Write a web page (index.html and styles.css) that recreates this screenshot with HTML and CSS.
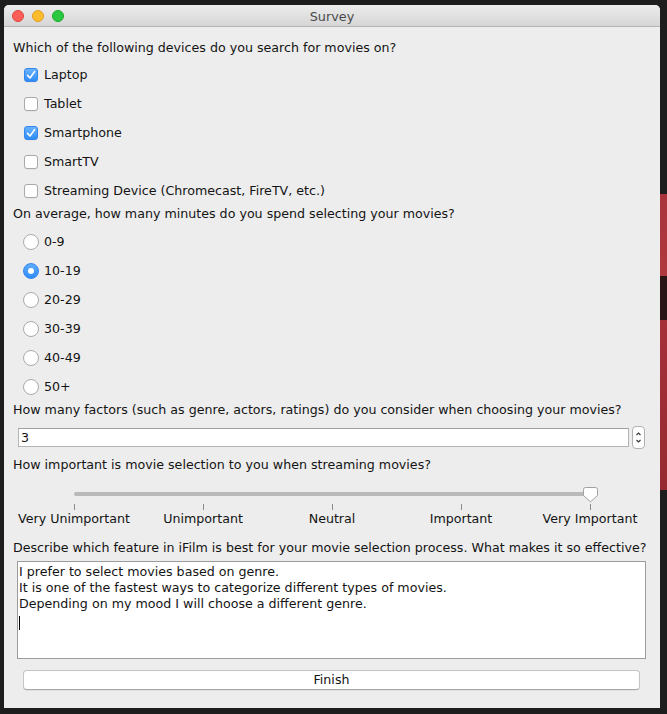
FILE: index.html
```html
<!DOCTYPE html>
<html>
<head>
<meta charset="utf-8">
<title>Survey</title>
<link rel="stylesheet" href="styles.css">
</head>
<body>
<div class="window">
  <div class="titlebar">
    <div class="lights">
      <span class="light red"></span>
      <span class="light yellow"></span>
      <span class="light green"></span>
    </div>
    <div class="title">Survey</div>
    <div></div>
  </div>
  <div class="content">
    <div class="q q1">Which of the following devices do you search for movies on?</div>
    <div class="opts">
      <div class="opt"><span class="cb on"><svg viewBox="0 0 14 14" width="14" height="14"><path d="M3.6 7.4 L6 10 L10.6 3.6" fill="none" stroke="#fff" stroke-width="1.6" stroke-linecap="round" stroke-linejoin="round"/></svg></span><span>Laptop</span></div>
      <div class="opt"><span class="cb"></span><span>Tablet</span></div>
      <div class="opt"><span class="cb on"><svg viewBox="0 0 14 14" width="14" height="14"><path d="M3.6 7.4 L6 10 L10.6 3.6" fill="none" stroke="#fff" stroke-width="1.6" stroke-linecap="round" stroke-linejoin="round"/></svg></span><span>Smartphone</span></div>
      <div class="opt"><span class="cb"></span><span>SmartTV</span></div>
      <div class="opt"><span class="cb"></span><span>Streaming Device (Chromecast, FireTV, etc.)</span></div>
    </div>
    <div class="q">On average, how many minutes do you spend selecting your movies?</div>
    <div class="opts radios">
      <div class="opt"><span class="rb"></span><span>0-9</span></div>
      <div class="opt"><span class="rb on"></span><span>10-19</span></div>
      <div class="opt"><span class="rb"></span><span>20-29</span></div>
      <div class="opt"><span class="rb"></span><span>30-39</span></div>
      <div class="opt"><span class="rb"></span><span>40-49</span></div>
      <div class="opt"><span class="rb"></span><span>50+</span></div>
    </div>
    <div class="q">How many factors (such as genre, actors, ratings) do you consider when choosing your movies?</div>
    <div class="spinner">
      <div class="field">3</div>
      <div class="arrows"><svg viewBox="0 0 13 23" width="13" height="23"><path d="M4.5 9 L6.5 7 L8.5 9" fill="none" stroke="#333" stroke-width="1.1"/><path d="M4.5 14 L6.5 16 L8.5 14" fill="none" stroke="#333" stroke-width="1.1"/></svg></div>
    </div>
    <div class="q q4">How important is movie selection to you when streaming movies?</div>
    <div class="slider">
      <div class="track-wrap">
        <div class="track"></div>
        <svg class="thumb" viewBox="0 0 17 17" width="17" height="17"><path d="M1.5 3.5 Q1.5 1.5 3.5 1.5 H13.5 Q15.5 1.5 15.5 3.5 V9.5 L8.5 15.8 L1.5 9.5 Z" fill="#fff" stroke="#a0a0a0" stroke-width="1"/></svg>
      </div>
      <div class="ticks"><span></span><span></span><span></span><span></span><span></span></div>
      <div class="tick-labels">
        <span>Very Unimportant</span><span>Unimportant</span><span>Neutral</span><span>Important</span><span>Very Important</span>
      </div>
    </div>
    <div class="q q5">Describe which feature in iFilm is best for your movie selection process. What makes it so effective?</div>
    <div class="textarea">
      <div>I prefer to select movies based on genre.</div>
      <div>It is one of the fastest ways to categorize different types of movies.</div>
      <div>Depending on my mood I will choose a different genre.</div>
      <div><span class="caret"></span></div>
    </div>
    <div class="button">Finish</div>
  </div>
</div>
</body>
</html>
```
FILE: styles.css
```css
html, body {
  margin: 0;
  padding: 0;
}
body {
  width: 667px;
  height: 714px;
  overflow: hidden;
  background:
    linear-gradient(to bottom,
      transparent 0, transparent 194px,
      #a9343b 194px, #b0383f 276px,
      #2a1516 276px, #2a1516 320px,
      #a5303a 320px, #962a31 490px,
      transparent 490px) right top / 7px 100% no-repeat,
    #1d1d1d;
  font-family: "DejaVu Sans", "Liberation Sans", sans-serif;
  font-size: 12.65px;
  color: #141414;
  padding-top: 5px;
  box-sizing: border-box;
}
.window {
  margin-left: 4px;
  width: 656px;
  height: 703px;
  background: #ededed;
  border-radius: 5px 5px 0 0;
  overflow: hidden;
  display: flex;
  flex-direction: column;
}
.titlebar {
  height: 21px;
  border-bottom: 1px solid #b4b4b4;
  background: linear-gradient(#ececec, #d6d6d6);
  display: grid;
  grid-template-columns: 1fr auto 1fr;
  align-items: center;
}
.lights {
  display: flex;
  gap: 8px;
  padding-left: 8px;
  padding-top: 1px;
}
.light {
  width: 12px;
  height: 12px;
  border-radius: 50%;
  box-sizing: border-box;
}
.light.red { background: #fc5f57; border: 1px solid #e0443e; }
.light.yellow { background: #fdbc2e; border: 1px solid #dea123; }
.light.green { background: #2bc840; border: 1px solid #1aab29; }
.title {
  font-size: 12.8px;
  color: #4a4a4a;
  padding-top: 1px;
}
.content {
  padding-left: 9px;
  display: flex;
  flex-direction: column;
}
.q {
  line-height: 18px;
  height: 18px;
  white-space: nowrap;
}
.q1 { margin-top: 12px; }
.opts { margin-top: 3px; display: flex; flex-direction: column; }
.radios { margin-top: 4px; }
.opt {
  height: 29px;
  display: flex;
  align-items: center;
  gap: 6px;
  padding-left: 11px;
}
.radios .opt { padding-left: 10px; gap: 5px; }
.cb {
  width: 14px;
  height: 14px;
  box-sizing: border-box;
  border: 1px solid #a9a9a9;
  border-radius: 3px;
  background: #fff;
  display: block;
  box-shadow: 0 0.5px 0.5px rgba(0,0,0,0.08);
}
.cb svg { display: block; margin: -1px; }
.cb.on {
  border-color: #3286ee;
  background: linear-gradient(#69b3fd, #2f8cf6);
}
.rb {
  width: 16px;
  height: 16px;
  box-sizing: border-box;
  border: 1px solid #a9a9a9;
  border-radius: 50%;
  background: #fff;
  display: flex;
  align-items: center;
  justify-content: center;
}
.rb.on {
  border-color: #3286ee;
  background: linear-gradient(#5fadfd, #2f8cf6);
}
.rb.on::after {
  content: "";
  width: 6px;
  height: 6px;
  border-radius: 50%;
  background: #fff;
}
.spinner {
  margin-top: 7px;
  height: 23px;
  display: flex;
  align-items: center;
  gap: 3px;
  padding-left: 5px;
}
.field {
  width: 611px;
  height: 19px;
  box-sizing: border-box;
  background: #fff;
  border: 1px solid #b5b5b5;
  border-top-color: #a0a0a0;
  line-height: 17px;
  padding-left: 2px;
}
.arrows {
  width: 13px;
  height: 23px;
  box-sizing: border-box;
  border: 1px solid #b0b0b0;
  border-radius: 4px;
  background: #fff;
  overflow: hidden;
}
.arrows svg { display: block; margin: -1px; }
.q4 { margin-top: 7px; }
.slider {
  display: flex;
  flex-direction: column;
}
.track-wrap {
  position: relative;
  height: 30px;
  margin-left: 61px;
  width: 517px;
}
.track {
  margin-top: 18px;
  height: 4px;
  border-radius: 2px;
  background: #b9b9b9;
}
.thumb {
  position: absolute;
  left: 508px;
  top: 12px;
}
.ticks {
  margin-left: 61px;
  width: 517px;
  height: 7px;
  display: flex;
  justify-content: space-between;
}
.ticks span {
  width: 1px;
  height: 6px;
  background: #8d8d8d;
}
.tick-labels {
  margin-left: -3.5px;
  display: grid;
  grid-template-columns: repeat(5, 129px);
  height: 16px;
  line-height: 16px;
  width: 645px;
}
.tick-labels span {
  text-align: center;
  white-space: nowrap;
}
.q5 { margin-top: 12px; }
.textarea {
  margin-top: 4px;
  margin-left: 4px;
  width: 629px;
  height: 98px;
  box-sizing: border-box;
  background: #fff;
  border: 1px solid #9c9c9c;
  padding: 2px 0 0 1px;
  line-height: 16px;
}
.textarea div { height: 16px; white-space: nowrap; }
.caret {
  display: inline-block;
  width: 1px;
  height: 14px;
  background: #000;
  vertical-align: middle;
  margin-top: 4px;
}
.button {
  margin-top: 11px;
  margin-left: 10px;
  width: 617px;
  height: 20px;
  box-sizing: border-box;
  background: #fff;
  border: 1px solid #c4c4c4;
  border-bottom-color: #a8a8a8;
  border-radius: 4px;
  text-align: center;
  line-height: 18px;
  box-shadow: 0 0.5px 0.5px rgba(0,0,0,0.1);
}
```
